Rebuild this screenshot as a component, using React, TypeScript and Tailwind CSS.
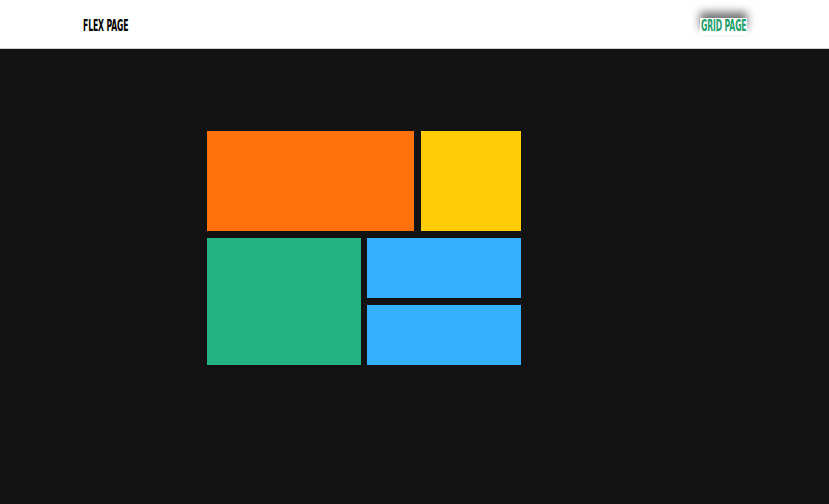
import React from "react";

export default function App() {
  const font = { fontFamily: '"DejaVu Sans Condensed", "DejaVu Sans", sans-serif' };
  return (
    <div className="w-[829px] h-[504px] bg-[#121212] flex flex-col">
      <header className="h-[49px] bg-white border-b border-[#d0d0d0] flex items-center justify-between pl-[83px] pr-[82px] shrink-0">
        <span className="w-[46px] h-[17px] flex items-center mt-[5px]">
          <span style={font} className="font-bold text-[15px] leading-none text-black uppercase inline-block origin-left scale-x-[0.57] tracking-[-0.2px] whitespace-nowrap">Flex Page</span>
        </span>
        <span className="bg-white shadow-[0_-6px_8px_rgba(0,0,0,0.55)] w-[47px] h-[17px] pl-[1px] flex items-center mt-[5px]">
          <span style={font} className="font-bold text-[15px] leading-none text-[#1f9f6d] uppercase inline-block origin-left scale-x-[0.57] tracking-[-0.2px] whitespace-nowrap">Grid Page</span>
        </span>
      </header>
      <main className="pl-[207px] pt-[82px] flex flex-col gap-[7px]">
        <div className="flex gap-[7px]">
          <div className="w-[207px] h-[100px] bg-[#ff710c]" />
          <div className="w-[100px] h-[100px] bg-[#ffcc05]" />
        </div>
        <div className="flex gap-[6px]">
          <div className="w-[154px] h-[127px] bg-[#23b383]" />
          <div className="flex flex-col gap-[7px]">
            <div className="w-[154px] h-[60px] bg-[#35b0ff]" />
            <div className="w-[154px] h-[60px] bg-[#35b0ff]" />
          </div>
        </div>
      </main>
    </div>
  );
}
